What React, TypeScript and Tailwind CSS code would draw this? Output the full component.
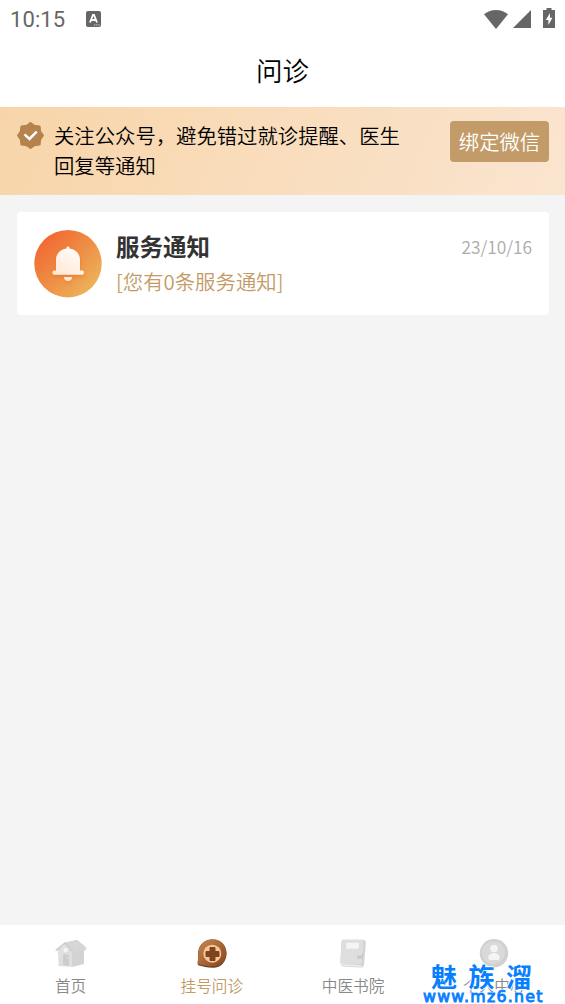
import type { ReactNode } from "react";

function StatusBar() {
  return (
    <div className="flex h-[38px] items-center bg-white pl-[10px] pr-[10px] text-[#666]">
      <span className="mt-[2px] font-['Roboto',sans-serif] text-[22px] font-normal leading-none tracking-[0.1px]">10:15</span>
      <svg className="ml-[21px]" width="15" height="16" viewBox="0 0 15 16">
        <rect width="15" height="16" rx="2" fill="#666" />
        <path d="M4 11.5 7 3.8h1l3 7.7M5.2 9h4.6" fill="none" stroke="#fff" strokeWidth="1.8" />
        <path d="M8 14h6" stroke="#ccc" strokeWidth="1" strokeDasharray="1.5 .6" />
      </svg>
      <svg className="ml-auto" width="24" height="19" viewBox="0 0 24 19">
        <path d="M0 4.3C7-1.4 17-1.4 24 4.3L12 19z" fill="#666" />
      </svg>
      <svg className="ml-[5px]" width="18" height="18" viewBox="0 0 18 18">
        <path d="M18 0v18H0z" fill="#666" />
      </svg>
      <svg className="ml-[12px] mb-[2px]" width="12" height="20" viewBox="0 0 12 20">
        <path d="M3.5 0h5v2H12v18H0V2h3.5z" fill="#666" />
        <path d="M7 5 2.8 12H5.4v5L9.4 9.8H7z" fill="#fff" />
      </svg>
    </div>
  );
}

function VerifiedIcon() {
  return (
    <svg width="27" height="27" viewBox="0 0 27 27">
      <path
        d="M13.5 1 17.4 3.8 22.6 4.4 23.2 9.6 26 13.5 23.2 17.4 22.6 22.6 17.4 23.2 13.5 26 9.6 23.2 4.4 22.6 3.8 17.4 1 13.5 3.8 9.6 4.4 4.4 9.6 3.8z"
        fill="#b4834e"
        stroke="#b4834e"
        strokeWidth="2"
        strokeLinejoin="round"
      />
      <path d="m7.5 12.3 5 4.6 7.2-7.3" fill="none" stroke="#fff" strokeWidth="2.5" />
    </svg>
  );
}

function BellIcon() {
  return (
    <svg width="68" height="68" viewBox="0 0 68 68">
      <defs>
        <linearGradient id="bellBg" x1="0.1" y1="0.1" x2="0.9" y2="0.9">
          <stop offset="0" stopColor="#f1652f" />
          <stop offset="1" stopColor="#ecb65c" />
        </linearGradient>
        <linearGradient id="bell" x1="1" y1="0" x2="0.4" y2="1">
          <stop offset="0" stopColor="#fff" />
          <stop offset="1" stopColor="#ffead9" />
        </linearGradient>
        <filter id="bellShadow" x="-30%" y="-30%" width="160%" height="170%">
          <feDropShadow dx="0" dy="2" stdDeviation="2" floodColor="#d95d17" floodOpacity=".4" />
        </filter>
      </defs>
      <circle cx="34" cy="33.7" r="33.7" fill="url(#bellBg)" />
      <g filter="url(#bellShadow)">
        <path
          d="M34 16.5c1 0 1.5.7 1.5 2C42 19.3 46 24 46 30v10.5h2.2c2.3 0 2.3 4.3 0 4.3H20.3c-2.3 0-2.3-4.3 0-4.3H22V30c0-6 4-10.7 10.5-11.5 0-1.3.5-2 1.5-2z"
          fill="url(#bell)"
        />
        <path d="M30 47h8c0 5.2-8 5.2-8 0z" fill="#ffe9d6" />
      </g>
    </svg>
  );
}

function HomeIcon() {
  return (
    <svg width="32" height="30" viewBox="0 0 32 30">
      <path d="m3 10 9-5 6 7v16L3.5 27z" fill="#dfdfdf" />
      <path d="m17 12 12-2v15l-12 3z" fill="#d3d3d3" />
      <path d="M10 4 22 1.3l8.7 7v2.4L17.5 14z" fill="#d6d6d6" stroke="#d6d6d6" strokeLinejoin="round" />
      <path d="M1.5 11 10.2 4l7.3 8.5" fill="none" stroke="#d0d0d0" strokeWidth="2" strokeLinejoin="round" strokeLinecap="round" />
      <circle cx="10.6" cy="11" r="2.3" fill="#f4f4f4" />
      <path d="m8 15.3 6 .4v11L8 26z" fill="#cdcdcd" />
      <circle cx="12.8" cy="19" r=".7" fill="#eee" />
    </svg>
  );
}

function ConsultIcon() {
  return (
    <svg width="32" height="30" viewBox="0 0 32 30">
      <defs>
        <linearGradient id="consult" x1="0" y1="0" x2="1" y2="1">
          <stop offset="0" stopColor="#ca8950" />
          <stop offset="1" stopColor="#85451d" />
        </linearGradient>
      </defs>
      <path d="M3 26.5C.8 26 2.3 22.5 2.2 17.5 1 6.5 8 .5 16.5.5 25 .5 30.5 6.5 30.5 14.5S25 28.8 17 28.8C11 28.8 7 27.3 3 26.5z" fill="#70391b" />
      <path d="M2 25c-1-1.5.5-4 .3-9C2.3 5.5 9 .2 16.5.2 25 .2 30.4 6.5 30.4 14S25 27.5 16.5 27.5C10.500 27.500 5.500 26.200 2 25z" fill="url(#consult)" />
      <circle cx="16.3" cy="14.700" r="9" fill="#f9c69a" />
      <path d="M14 8.500h5v4h4v5h-4v4h-5v-4h-4v-5h4z" fill="#7d451e" stroke="#7d451e" strokeLinejoin="round" />
    </svg>
  );
}

function BookIcon() {
  return (
    <svg width="32" height="30" viewBox="0 0 32 30">
      <path d="M6 .8h20c2 0 3 1 2.8 3L27 25.5c-.2 2-1.200 3-3.200 2.900L7 27.500c-2-.2-4-2-3.700-4L4.600 2.500C4.600 1.300 5 .8 6 .8z" fill="#d3d3d3" />
      <path d="M3.8 22.5c0 2 1 3 3.4 3.3l17.5 1.3" fill="none" stroke="#f3f3f3" strokeWidth="1.2" />
      <path d="M6 .8h18.300c1.700 0 2.400 1 2.300 2.500L25 22.800c-.1 1.700-1 2.700-3 2.600L6.200 24.700c-2.100-.1-3-1.100-2.800-3L4.800 2c0-.8.4-1.200 1.200-1.200z" fill="#dedede" />
      <path d="M9.5 3.800h12.600l-.5 6H9z" fill="#f5f5f5" />
      <path d="M20 17.300h6M25.500 14.500l-.4 4.500h-5" fill="none" stroke="#c6c6c6" strokeWidth="1.3" />
    </svg>
  );
}

function ProfileIcon() {
  return (
    <svg width="32" height="30" viewBox="0 0 32 30">
      <circle cx="16" cy="14.3" r="14.2" fill="#d0d0d0" />
      <circle cx="15.3" cy="13.700" r="11.5" fill="#d9d9d9" />
      <circle cx="16" cy="9.5" r="3.8" fill="#f4f4f4" />
      <path d="M10.300 18.500c0-6 11.400-6 11.400 0 0 2-1 2.500-2.400 2.500h-6.600c-1.400 0-2.400-.5-2.400-2.500z" fill="#f4f4f4" />
    </svg>
  );
}

function Tab({ icon, label, active = false }: { icon: ReactNode; label: string; active?: boolean }) {
  return (
    <div className="flex flex-1 flex-col items-center pt-[14px]">
      {icon}
      <span className={`mt-[6px] text-[15.7px] leading-[22px] ${active ? "text-[#c49b67]" : "text-[#888]"}`}>
        {label}
      </span>
    </div>
  );
}

export default function App() {
  return (
    <div className="relative flex h-[1004px] w-[565px] flex-col overflow-hidden bg-[#f4f4f4] font-['Noto_Sans_CJK_SC',sans-serif] font-[350]">
      <StatusBar />
      <header className="flex h-[69px] items-center justify-center bg-white pb-[5px] text-[26.5px] text-black">
        问诊
      </header>

      <section className="flex h-[88px] items-start bg-linear-[115deg] from-[#f8d5a9] to-[#fae5d0] pl-[17px] pr-4">
        <div className="mt-[15px]">
          <VerifiedIcon />
        </div>
        <p className="ml-[10px] mt-[13px] w-[350px] text-[20.35px] leading-[30px] text-black">
          关注公众号，避免错过就诊提醒、医生回复等通知
        </p>
        <button className="ml-auto mt-[14px] h-[41px] w-[99px] rounded-[4px] bg-[#c29b69] pb-px text-[20.35px] leading-[40px] text-white">
          绑定微信
        </button>
      </section>

      <main className="flex-1 px-4 pt-[17px]">
        <div className="ml-px flex h-[103px] rounded-[4px] bg-white pl-[17px] pr-[17px] pt-[18px]">
          <BellIcon />
          <div className="ml-[14px] -mt-px">
            <h2 className="text-[23.5px] font-bold leading-[34px] text-[#333]">服务通知</h2>
            <p className="mt-[3px] text-[20.4px] leading-[30px] text-[#c49b67]">[您有0条服务通知]</p>
          </div>
          <time className="ml-auto mt-1 text-[17.3px] leading-[26px] text-[#aaa]">23/10/16</time>
        </div>
      </main>

      <nav className="flex h-[79px] bg-white">
        <Tab icon={<HomeIcon />} label="首页" />
        <Tab icon={<ConsultIcon />} label="挂号问诊" active />
        <Tab icon={<BookIcon />} label="中医书院" />
        <Tab icon={<ProfileIcon />} label="个人中心" />
      </nav>

      <div className="absolute bottom-0 left-[423px] w-[125px] text-[#087fff] [text-shadow:1px_0_#fff,-1px_0_#fff,0_1px_#fff,0_-1px_#fff]">
        <div className="ml-[8px] whitespace-nowrap text-[26px] font-bold leading-[26px] tracking-[11.5px]">魅族溜</div>
        <div className="whitespace-nowrap font-['DejaVu_Sans',sans-serif] text-[15.8px] font-normal leading-[15px] tracking-[1.25px] [-webkit-text-stroke:0.9px_#087fff]">
          www.mz6.net
        </div>
      </div>
    </div>
  );
}
